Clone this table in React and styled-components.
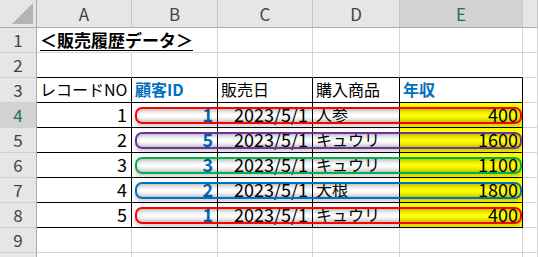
import React from "react";
import styled, { createGlobalStyle } from "styled-components";

const GlobalStyle = createGlobalStyle`
  *, *::before, *::after {
    box-sizing: border-box;
  }
  html, body {
    margin: 0;
    padding: 0;
    background: #ffffff;
    overflow: hidden;
  }
  body {
    font-family: "Noto Sans CJK JP", "Noto Sans", sans-serif;
    line-height: 1.2;
  }
`;

const COLUMNS = "37px 95px 86px 95px 87px 123px 1fr";
const GRID = "#d4d4d4";
const BLUE = "#0070c0";

const Sheet = styled.div`
  width: 538px;
  height: 257px;
  overflow: hidden;
  display: flex;
  flex-direction: column;
  color: #000;
`;

const Row = styled.div`
  display: grid;
  grid-template-columns: ${COLUMNS};
  grid-template-rows: minmax(0, 1fr);
  height: ${p => (p.$head ? 28 : 25)}px;
  flex: none;
`;

const Corner = styled.div`
  grid-row: 1;
  grid-column: 1;
  background: #e6e6e6;
  border-right: 1px solid #ababab;
  border-bottom: 1px solid #ababab;
  display: flex;
  align-items: flex-end;
  justify-content: flex-end;
  padding: 0 3px 3px 0;
`;

const ColHead = styled.div`
  grid-row: 1;
  grid-column: ${p => p.$col};
  background: ${p => (p.$selected ? "#d2d2d2" : "#e6e6e6")};
  color: ${p => (p.$selected ? "#217346" : "#444")};
  border-right: 1px solid #c6c6c6;
  border-bottom: 1px solid #ababab;
  display: flex;
  align-items: center;
  justify-content: center;
  font-size: 17px;
  padding-top: 1px;
`;

const RowHead = styled.div`
  grid-row: 1;
  grid-column: 1;
  background: ${p => (p.$selected ? "#d2d2d2" : "#e6e6e6")};
  color: ${p => (p.$selected ? "#217346" : "#444")};
  border-right: 1px solid #ababab;
  border-bottom: 1px solid #d0d0d0;
  display: flex;
  align-items: center;
  justify-content: center;
  font-size: 17px;
`;

const Cell = styled.div`
  grid-row: 1;
  grid-column: ${p => p.$col} / span ${p => p.$span || 1};
  background: ${p => (p.$fill ? "#ffff00" : "#ffffff")};
  border-right: 1px solid ${p => (p.$lineRight ? "#000" : GRID)};
  border-bottom: 1px solid ${p => (p.$lineBottom ? "#000" : GRID)};
  display: flex;
  align-items: center;
  justify-content: ${p => (p.$align === "right" ? "flex-end" : "flex-start")};
  padding: 0 ${p => (p.$align === "right" ? 4 : 3)}px 0 3px;
  font-size: ${p => (p.$num ? 18 : 16)}px;
  font-weight: ${p => (p.$bold ? 700 : 400)};
  color: ${p => (p.$blue ? BLUE : "#000")};
  white-space: nowrap;
  min-width: 0;
`;

const Title = styled.span`
  font-size: 17px;
  font-weight: 700;
  text-decoration: underline;
  text-underline-offset: 3px;
  text-decoration-thickness: 1px;
`;

const Highlight = styled.div`
  grid-row: 1;
  grid-column: 3 / 7;
  margin: 4px 1px 4px 3px;
  border: 2px solid ${p => p.$color};
  border-radius: 7px;
  background: linear-gradient(
    to bottom,
    rgba(0, 0, 0, 0.16),
    rgba(0, 0, 0, 0) 45%,
    rgba(0, 0, 0, 0) 55%,
    rgba(0, 0, 0, 0.16)
  );
  box-shadow: inset 0 0 4px rgba(0, 0, 0, 0.18), 0 3px 4px rgba(0, 0, 0, 0.18);
  z-index: 1;
  pointer-events: none;
`;

const letters = ["A", "B", "C", "D", "E"];

const sales = [
  { no: 1, id: 1, date: "2023/5/1", item: "人参", income: 400, color: "#ff0000" },
  { no: 2, id: 5, date: "2023/5/1", item: "キュウリ", income: 1600, color: "#7030a0" },
  { no: 3, id: 3, date: "2023/5/1", item: "キュウリ", income: 1100, color: "#00b050" },
  { no: 4, id: 2, date: "2023/5/1", item: "大根", income: 1800, color: "#0070c0" },
  { no: 5, id: 1, date: "2023/5/1", item: "キュウリ", income: 400, color: "#ff0000" },
];

function CornerMark() {
  return (
    <svg width="21" height="21" viewBox="0 0 21 21">
      <polygon points="21,0 21,21 0,21" fill="#b4b4b4" />
    </svg>
  );
}

function EmptyCells({ from = 2, bottomLine = false }) {
  const cells = [];
  for (let c = from; c <= 7; c++) {
    cells.push(<Cell key={c} $col={c} $lineBottom={bottomLine && c <= 6} />);
  }
  return cells;
}

export default function App() {
  return (
    <>
      <GlobalStyle />
      <Sheet>
        <Row $head>
          <Corner>
            <CornerMark />
          </Corner>
          {letters.map((l, i) => (
            <ColHead key={l} $col={i + 2} $selected={l === "E"}>
              {l}
            </ColHead>
          ))}
          <ColHead $col={7} />
        </Row>

        <Row>
          <RowHead>1</RowHead>
          <Cell $col={2} $span={2}>
            <Title>＜販売履歴データ＞</Title>
          </Cell>
          <EmptyCells from={4} />
        </Row>

        <Row>
          <RowHead>2</RowHead>
          <EmptyCells bottomLine />
        </Row>

        <Row>
          <RowHead>3</RowHead>
          <Cell $col={2} $lineRight $lineBottom>レコードNO</Cell>
          <Cell $col={3} $lineRight $lineBottom $bold $blue>顧客ID</Cell>
          <Cell $col={4} $lineRight $lineBottom>販売日</Cell>
          <Cell $col={5} $lineRight $lineBottom>購入商品</Cell>
          <Cell $col={6} $lineRight $lineBottom $bold $blue>年収</Cell>
          <Cell $col={7} />
        </Row>

        {sales.map((s, i) => (
          <Row key={s.no}>
            <RowHead $selected={i === 0}>{i + 4}</RowHead>
            <Cell $col={2} $lineRight $lineBottom $align="right" $num>{s.no}</Cell>
            <Cell $col={3} $lineRight $lineBottom $align="right" $num $bold $blue>
              {s.id}
            </Cell>
            <Cell $col={4} $lineRight $lineBottom $align="right" $num>{s.date}</Cell>
            <Cell $col={5} $lineRight $lineBottom>{s.item}</Cell>
            <Cell $col={6} $lineRight $lineBottom $align="right" $num $fill>
              {s.income}
            </Cell>
            <Cell $col={7} />
            <Highlight $color={s.color} />
          </Row>
        ))}

        <Row>
          <RowHead>9</RowHead>
          <EmptyCells />
        </Row>
        <Row>
          <RowHead />
          <EmptyCells />
        </Row>
      </Sheet>
    </>
  );
}
